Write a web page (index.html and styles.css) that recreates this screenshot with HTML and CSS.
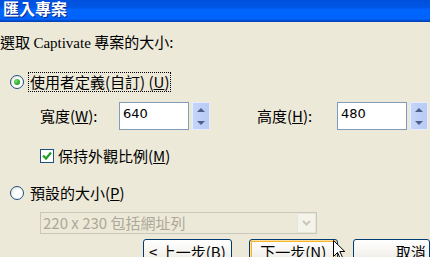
FILE: index.html
```html
<!DOCTYPE html>
<html lang="zh-Hant">
<head>
    <meta charset="UTF-8">
    <title>匯入專案</title>
    <link rel="stylesheet" href="styles.css">
</head>
<body>

<!-- Barra de título -->
<div class="titlebar">匯入專案</div>

<div class="content">
    <p class="prompt">選取 <span class="latin">Captivate</span> 專案的大小:</p>

    <div class="radio-row first">
        <span class="radio checked"></span>
        <span class="focus">使用者定義(自訂) (<u>U</u>)</span>
    </div>

    <div class="size-row">
        <span class="field-label">寬度(<u>W</u>):</span>
        <span class="textbox">640</span>
        <span class="spin"><i class="up"></i><i class="down"></i></span>
        <span class="field-label second">高度(<u>H</u>):</span>
        <span class="textbox">480</span>
        <span class="spin"><i class="up"></i><i class="down"></i></span>
    </div>

    <div class="check-row">
        <span class="checkbox">
            <svg width="10" height="10" viewBox="0 0 10 10"><path d="M1 4.5 L4 7.5 L9 1.5" fill="none" stroke="#21a121" stroke-width="2.2"/></svg>
        </span>
        <span>保持外觀比例(<u>M</u>)</span>
    </div>

    <div class="radio-row second">
        <span class="radio"></span>
        <span class="plain">預設的大小(<u>P</u>)</span>
    </div>

    <div class="select disabled">
        <span class="select-text">220 x 230 包括網址列</span>
        <span class="select-btn">
            <svg width="9" height="6" viewBox="0 0 9 6"><path d="M1 1 L4.5 4.5 L8 1" fill="none" stroke="#c9c7ba" stroke-width="2"/></svg>
        </span>
    </div>

    <div class="buttons">
        <button class="btn">&lt; 上一步(<u>B</u>)</button>
        <button class="btn default">下一步(<u>N</u>)</button>
        <button class="btn cancel">取消</button>
    </div>
</div>

<!-- Puntero del ratón -->
<svg class="cursor" width="13" height="20" viewBox="0 0 13 20">
    <path d="M0.5 0.5 L0.5 16.5 L4.5 12.5 L7.5 19 L9.8 18 L6.8 11.5 L11.8 11.5 Z" fill="#fff" stroke="#000" stroke-width="1"/>
</svg>

</body>
</html>
```

FILE: styles.css
```css
body {
    margin: 0;
    width: 430px;
    height: 257px;
    overflow: hidden;
    position: relative;
    background-color: #ece9d8;
    font-family: "Noto Sans CJK TC", "Liberation Sans", sans-serif;
    font-size: 15px;
    color: #000;
}

.titlebar {
    height: 22px;
    line-height: 16px;
    padding-left: 3px;
    font-weight: bold;
    font-size: 16px;
    color: #fff;
    text-shadow: 1px 1px 0 #0a2a8a;
    background: linear-gradient(to bottom, #0050dc 0px, #0055e5 7px, #0066ff 10px, #0063fa 19px, #0048c8 21px, #003fb0 22px);
}

.content {
    display: flex;
    flex-direction: column;
}

.prompt {
    margin: 11px 0 0 0;
    line-height: 18px;
}

.latin {
    font-family: "Liberation Serif", serif;
}

u {
    text-decoration: underline;
    text-underline-offset: 1px;
}

.radio-row {
    display: flex;
    align-items: center;
    height: 18px;
    line-height: 18px;
    padding-left: 10px;
}

.radio-row.first {
    margin-top: 21px;
}

.radio-row.second {
    margin-top: 19px;
}

.radio {
    width: 12px;
    height: 12px;
    border: 1px solid #1c5180;
    border-radius: 50%;
    background: radial-gradient(circle at 60% 60%, #fff 40%, #d8d5c8 100%);
    position: relative;
}

.radio.checked::after {
    content: "";
    position: absolute;
    left: 3px;
    top: 3px;
    width: 6px;
    height: 6px;
    border-radius: 50%;
    background: radial-gradient(circle at 35% 35%, #6ee26e, #21a121 70%);
}

.focus {
    margin-left: 4px;
    padding: 0 1px;
    border: 1px dotted #000;
}

.plain {
    margin-left: 6px;
}

.size-row {
    display: flex;
    align-items: flex-start;
    height: 28px;
    margin-top: 11px;
    padding-left: 40px;
}

.field-label {
    width: 79px;
    line-height: 28px;
}

.field-label.second {
    width: 80px;
    margin-left: 47px;
}

.textbox {
    box-sizing: border-box;
    width: 70px;
    height: 28px;
    border: 1px solid #7f9db9;
    background-color: #fff;
    padding: 3px 0 0 3px;
    font-family: "DejaVu Sans", sans-serif;
    font-size: 13px;
    line-height: 16px;
}

.spin {
    box-sizing: border-box;
    width: 18px;
    height: 28px;
    margin-left: 3px;
    border: 1px solid #e6ecfb;
    background: linear-gradient(to right, #c5d4fa, #b8cbf6);
    display: flex;
    flex-direction: column;
    justify-content: space-between;
    align-items: center;
    padding: 5px 0 4px 0;
}

.spin i {
    width: 0;
    height: 0;
    border-left: 4px solid transparent;
    border-right: 4px solid transparent;
}

.spin .up {
    border-bottom: 4px solid #4d6185;
}

.spin .down {
    border-top: 4px solid #4d6185;
}

.check-row {
    display: flex;
    align-items: center;
    height: 18px;
    line-height: 18px;
    margin-top: 17px;
    padding-left: 40px;
}

.checkbox {
    box-sizing: border-box;
    width: 14px;
    height: 14px;
    border: 1px solid #1c5180;
    background-color: #fff;
    display: flex;
    align-items: center;
    justify-content: center;
    margin-right: 4px;
}

.select {
    box-sizing: border-box;
    display: flex;
    align-items: center;
    justify-content: space-between;
    width: 277px;
    height: 22px;
    margin: 10px 0 0 40px;
    border: 1px solid #c9c7ba;
}

.select-text {
    padding-left: 2px;
    color: #aca899;
    line-height: 20px;
}

.select-btn {
    box-sizing: border-box;
    width: 19px;
    height: 20px;
    background-color: #f5f4ea;
    border: 1px solid #e8e6da;
    display: flex;
    align-items: center;
    justify-content: center;
}

.buttons {
    display: flex;
    margin: 5px 0 0 143px;
}

.btn {
    box-sizing: border-box;
    width: 96px;
    height: 26px;
    border: 1px solid #003c74;
    border-radius: 3px;
    background: linear-gradient(to bottom, #ffffff, #f3f2ed 60%, #e3e0d4);
    font-family: "Noto Sans CJK TC", sans-serif;
    font-size: 15px;
    line-height: 20px;
    padding: 0;
    color: #000;
}

.btn.default {
    margin-left: 17px;
    box-shadow: inset 0 0 0 1px #ffe29a, inset 0 0 0 2px #f8b330;
}

.btn.cancel {
    margin-left: 15px;
    width: 80px;
    text-align: left;
    padding-left: 42px;
}

.cursor {
    position: absolute;
    left: 333px;
    top: 240px;
}
```
